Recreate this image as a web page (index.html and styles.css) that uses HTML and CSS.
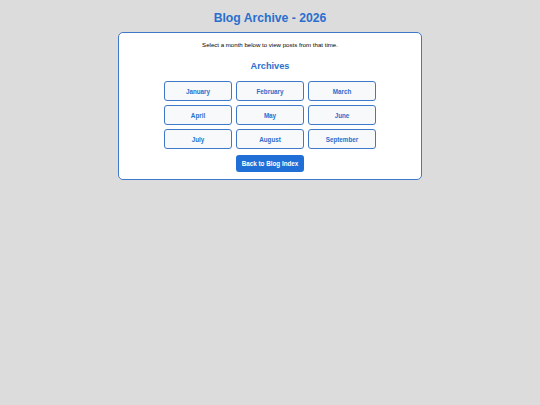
FILE: index.html
```html
<!DOCTYPE html>
<html>
<head>
<meta charset="utf-8">
<link rel="stylesheet" href="styles.css">
</head>
<body>
<h1 class="title">Blog Archive - 2026</h1>
<div class="card">
  <p class="intro">Select a month below to view posts from that time.</p>
  <h2 class="subtitle">Archives</h2>
  <div class="grid">
    <a class="month">January</a>
    <a class="month">February</a>
    <a class="month">March</a>
    <a class="month">April</a>
    <a class="month">May</a>
    <a class="month">June</a>
    <a class="month">July</a>
    <a class="month">August</a>
    <a class="month">September</a>
  </div>
  <div class="actions"><a class="back">Back to Blog Index</a></div>
</div>
</body>
</html>
```
FILE: styles.css
```css
html, body { margin: 0; padding: 0; }
body {
  background: #dcdcdc;
  font-family: "Liberation Sans", Arial, sans-serif;
  color: #000;
}
.title {
  margin: 0;
  padding-top: 11px;
  height: 21px;
  text-align: center;
  font-size: 12.2px;
  line-height: 15px;
  font-weight: bold;
  color: #2a6fce;
}
.card {
  box-sizing: border-box;
  width: 304px;
  margin: 0 auto;
  background: #fff;
  border: 1px solid #3f78c8;
  border-radius: 5px;
  padding: 7px 0 7px;
}
.intro {
  margin: 0;
  text-align: center;
  font-size: 6.1px;
  line-height: 9px;
}
.subtitle {
  margin: 12px 0 0;
  text-align: center;
  font-size: 9.2px;
  line-height: 11px;
  font-weight: bold;
  color: #2a6fce;
}
.grid {
  margin: 9px auto 0;
  display: grid;
  grid-template-columns: repeat(3, 68px);
  gap: 4px;
  justify-content: center;
}
.month {
  box-sizing: border-box;
  height: 20px;
  display: flex;
  align-items: center;
  justify-content: center;
  background: #f8f9fa;
  border: 1px solid #3f78c8;
  border-radius: 3px;
  font-size: 6.3px;
  font-weight: bold;
  color: #2a6fce;
}
.actions {
  display: flex;
  justify-content: center;
  margin-top: 6px;
}
.back {
  box-sizing: border-box;
  width: 68px;
  height: 17px;
  display: flex;
  align-items: center;
  justify-content: center;
  background: #1f6fd6;
  border-radius: 3px;
  font-size: 6.3px;
  font-weight: bold;
  color: #fff;
}
```
